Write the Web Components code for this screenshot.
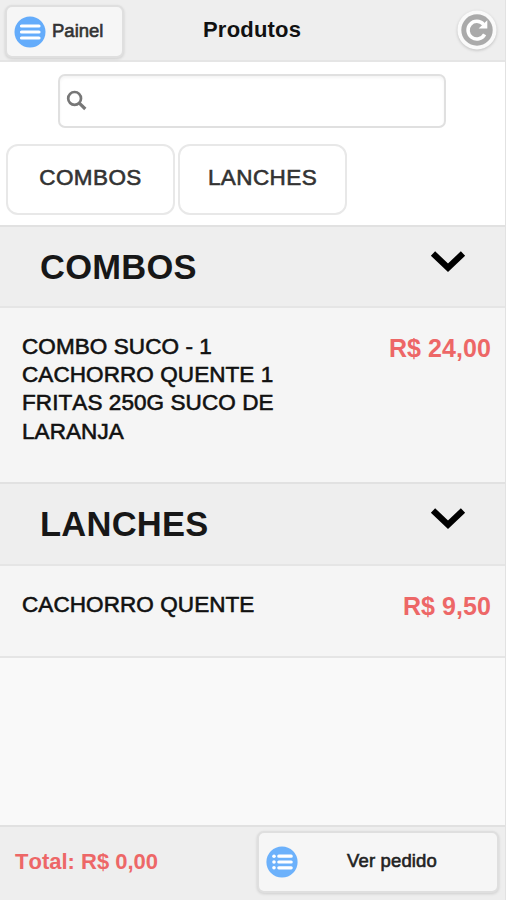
<!DOCTYPE html>
<html lang="pt-BR"><head><meta charset="utf-8"><title>Produtos</title>
<style>body{margin:0;background:#f9f9f9}</style></head><body>
<products-page></products-page>
<script>
const define=(name,html)=>{
  const t=document.createElement('template');t.innerHTML=html;
  customElements.define(name,class extends HTMLElement{
    constructor(){super();this.attachShadow({mode:'open'}).append(t.content.cloneNode(true));}
  });
};
define('icon-button',`<style>
:host{display:flex;box-sizing:border-box;align-items:center;background:#f6f6f6;border:2px solid #dfdfdf;border-radius:7px;box-shadow:0 1px 3px #0002;font-size:18.5px;color:#333;-webkit-text-stroke:.6px currentColor;white-space:nowrap}
.l{flex:1;text-align:var(--align,left);margin-top:-2px}</style><slot name="icon"></slot><span class="l"><slot></slot></span>`);
define('menu-icon',`<style>:host{display:block;width:32px;height:32px}svg{display:block}</style>
<svg width="32" height="32" viewBox="0 0 32 32"><circle cx="16" cy="16" r="15.5" fill="#64acfb"/><path d="M7.500 10h17.500M7.500 16h17.500M7.500 22h17.500" stroke="#fff" stroke-width="3.200" stroke-linecap="round"/></svg>`);
define('list-icon',`<style>:host{display:block;width:32px;height:32px}svg{display:block}</style>
<svg width="32" height="32" viewBox="0 0 32 32"><circle cx="16" cy="16" r="15.600" fill="#6cb1fb"/><path d="M12.800 10.200h12.400M12.800 16h12.400M12.800 21.800h12.400" stroke="#fff" stroke-width="3.200" stroke-linecap="round"/><g fill="#fff"><circle cx="8" cy="10.200" r="1.800"/><circle cx="8" cy="16" r="1.800"/><circle cx="8" cy="21.800" r="1.800"/></g></svg>`);
define('refresh-button',`<style>:host{display:block;width:42px;height:42px}svg{display:block;filter:drop-shadow(0 1px 1.500px #0003)}</style>
<svg width="42" height="42" viewBox="0 0 42 42"><circle cx="21" cy="21" r="19.500" fill="#fafafa"/><circle cx="21" cy="21" r="15.700" fill="#aaa"/><path d="M27.500 15.400A8.800 8.800 0 1 0 28.600 25.300" fill="none" stroke="#fff" stroke-width="3.500"/><path d="M31.300 11.200v8.400h-8.700z" fill="#fff"/></svg>`);
define('top-bar',`<style>:host{box-sizing:border-box;height:62px;padding:5px 7px 0 5px;display:grid;grid-template-columns:119px 1fr 42px;background:#eee;border-bottom:2px solid #e5e5e5}
icon-button{height:53px;padding-left:7px;box-sizing:border-box}menu-icon{margin-right:6px}
h1{margin:11px 0 0 79px;font-size:22px;line-height:28px;color:#111;letter-spacing:.2px}refresh-button{margin-top:4px}</style>
<icon-button><menu-icon slot="icon"></menu-icon>Painel</icon-button><h1><slot></slot></h1><refresh-button></refresh-button>`);
define('search-box',`<style>:host{display:flex;box-sizing:border-box;width:388px;height:54px;margin:12px 0 0 58px;border:2px solid #e0e0e0;border-radius:7px;box-shadow:inset 0 2px 3px #0000000c;align-items:center;padding-left:5px;background:#fff}</style>
<svg width="24" height="24" viewBox="0 0 24 24" fill="none" stroke="#777"><circle cx="9.600" cy="9.400" r="6.400" stroke-width="2.700"/><path d="m14.300 14.200 6 5.800" stroke-width="3.200"/></svg>`);
define('category-chip',`<style>:host{box-sizing:border-box;width:169px;height:71px;border:2px solid #e8e8e8;border-radius:12px;display:flex;justify-content:center;padding-top:17px;font-size:22.500px;line-height:30px;letter-spacing:.4px;color:#333;-webkit-text-stroke:.6px currentColor;background:#fff}</style><slot></slot>`);
define('category-nav',`<style>:host{display:flex;gap:3px;padding:16px 0 0 6px}</style><slot></slot>`);
define('category-header',`<style>:host{display:flex;box-sizing:border-box;height:83px;background:#eee;border-top:2px solid #e1e1e1;border-bottom:2px solid #e5e5e5;justify-content:space-between;padding:20px 39px 0 40px}
h2{margin:0;font-size:34.500px;line-height:40px;color:#171717;letter-spacing:.25px}svg{margin-top:3px}</style>
<h2><slot></slot></h2><svg width="36" height="24" viewBox="0 0 36 24"><path d="m3 3.500 15 14.300 15-14.300" fill="none" stroke="#000" stroke-width="6.200"/></svg>`);
define('product-row',`<style>:host{display:flex;justify-content:space-between;box-sizing:border-box;background:#f5f5f5;padding:24px 14px 0 22px}
.n{width:265px;margin-top:1px;font-size:22.500px;line-height:28.200px;color:#111;-webkit-text-stroke:.6px currentColor;letter-spacing:.08px;font-kerning:none}
.p{font-weight:bold;font-size:25px;line-height:32px;color:#ed6767;white-space:nowrap;letter-spacing:.08px}</style><div class="n"><slot></slot></div><div class="p"><slot name="price"></slot></div>`);
define('order-bar',`<style>:host{display:flex;box-sizing:border-box;height:75px;background:#eee;border-top:2px solid #e1e1e1;justify-content:space-between;padding:4px 6px 0 15px}
.t{font-weight:bold;font-size:22px;line-height:28px;color:#ed6767;padding-top:17px;font-kerning:none}
icon-button{width:242px;height:62px;padding:0 0 0 7px;--align:center;color:#222}icon-button span{display:block;padding-right:11px;letter-spacing:.15px}</style><div class="t"><slot></slot></div><icon-button><list-icon slot="icon"></list-icon><span>Ver pedido</span></icon-button>`);
define('products-page',`<style>:host{display:flex;flex-direction:column;box-sizing:border-box;width:506px;height:900px;background:#f9f9f9;border-right:1px solid #e2e2e2;font-family:"Liberation Sans",Arial,sans-serif}
.top{background:#fff;height:163px}.a{height:174px}.b{height:92px;border-bottom:2px solid #e5e5e5}order-bar{margin-top:auto}</style>
<top-bar>Produtos</top-bar><div class="top"><search-box></search-box><category-nav><category-chip>COMBOS</category-chip><category-chip>LANCHES</category-chip></category-nav></div>
<category-header>COMBOS</category-header><product-row class="a">COMBO SUCO - 1 CACHORRO QUENTE 1 FRITAS 250G SUCO DE LARANJA<span slot="price">R$ 24,00</span></product-row>
<category-header style="height:84px">LANCHES</category-header><product-row class="b">CACHORRO QUENTE<span slot="price">R$ 9,50</span></product-row>
<order-bar>Total: R$ 0,00</order-bar>`);
</script></body></html>
